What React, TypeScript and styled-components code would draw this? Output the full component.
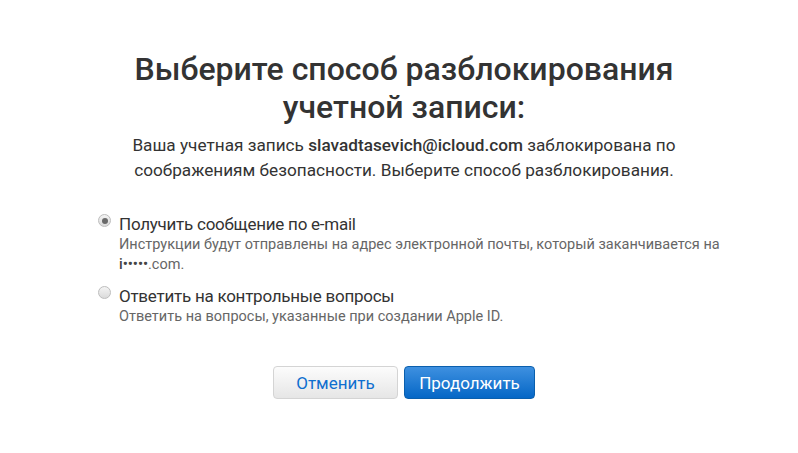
import React, { useState } from "react";
import styled, { createGlobalStyle } from "styled-components";

const Global = createGlobalStyle`
  html, body { margin: 0; padding: 0; background: #fff; }
  body { font-family: Roboto, "Noto Sans", Arial, sans-serif; color: #333; }
`;

const Page = styled.div`
  display: flex;
  justify-content: center;
  padding: 50px 0 0 10px;
`;

const Panel = styled.div`
  width: 612px;
  display: flex;
  flex-direction: column;
`;

const Title = styled.h1`
  margin: 0;
  text-align: center;
  font-size: 32px;
  line-height: 38px;
  font-weight: 500;
  color: #333;
`;

const Intro = styled.p`
  margin: 6.5px 0 0;
  text-align: center;
  font-size: 17.2px;
  line-height: 25px;
  color: #333;
  b { font-weight: 500; }
`;

const Options = styled.div`
  margin: 30.5px -30px 0 0;
  display: flex;
  flex-direction: column;
  gap: 10px;
`;

const Option = styled.label`
  display: grid;
  grid-template-columns: 21px 1fr;
  cursor: pointer;
`;

const Radio = styled.span<{ $checked: boolean }>`
  width: 13px;
  height: 13px;
  margin-top: 1px;
  border-radius: 50%;
  box-sizing: border-box;
  border: 1px solid #bdbdbd;
  background: linear-gradient(#f4f4f4, #dadada);
  display: flex;
  align-items: center;
  justify-content: center;
  &::after {
    content: "";
    width: 6px;
    height: 6px;
    border-radius: 50%;
    background: #6a6a6a;
    display: ${(p) => (p.$checked ? "block" : "none")};
  }
`;

const OptionTitle = styled.div`
  font-size: 17px;
  line-height: 22px;
  letter-spacing: -0.25px;
  color: #333;
`;

const OptionDesc = styled.div`
  font-size: 14.5px;
  line-height: 20px;
  color: #666;
  b { font-weight: 500; color: #444; }
`;

const Buttons = styled.div`
  margin-top: 39px;
  display: flex;
  justify-content: center;
  gap: 6px;
`;

const Button = styled.button<{ $primary?: boolean }>`
  box-sizing: border-box;
  height: 33px;
  width: ${(p) => (p.$primary ? "131px" : "125px")};
  padding: 0;
  border-radius: 4px;
  font-family: inherit;
  font-size: 17px;
  cursor: pointer;
  border: 1px solid ${(p) => (p.$primary ? "#0a5fad" : "#d4d4d4")};
  color: ${(p) => (p.$primary ? "#fff" : "#0f6fcf")};
  background: ${(p) =>
    p.$primary
      ? "linear-gradient(#3e90e0, #0567c6)"
      : "linear-gradient(#fcfcfc, #e6e6e6)"};
`;

export default function App() {
  const [choice, setChoice] = useState(0);
  return (
    <>
      <Global />
      <Page>
        <Panel>
          <Title>Выберите способ разблокирования учетной записи:</Title>
          <Intro>
            Ваша учетная запись <b>slavadtasevich@icloud.com</b> заблокирована по
            соображениям безопасности. Выберите способ разблокирования.
          </Intro>
          <Options>
            <Option onClick={() => setChoice(0)}>
              <Radio $checked={choice === 0} />
              <div>
                <OptionTitle>Получить сообщение по e-mail</OptionTitle>
                <OptionDesc>
                  Инструкции будут отправлены на адрес электронной почты, который заканчивается на{" "}
                  <b>i•••••</b>.com.
                </OptionDesc>
              </div>
            </Option>
            <Option onClick={() => setChoice(1)}>
              <Radio $checked={choice === 1} />
              <div>
                <OptionTitle>Ответить на контрольные вопросы</OptionTitle>
                <OptionDesc>Ответить на вопросы, указанные при создании Apple ID.</OptionDesc>
              </div>
            </Option>
          </Options>
          <Buttons>
            <Button>Отменить</Button>
            <Button $primary>Продолжить</Button>
          </Buttons>
        </Panel>
      </Page>
    </>
  );
}
